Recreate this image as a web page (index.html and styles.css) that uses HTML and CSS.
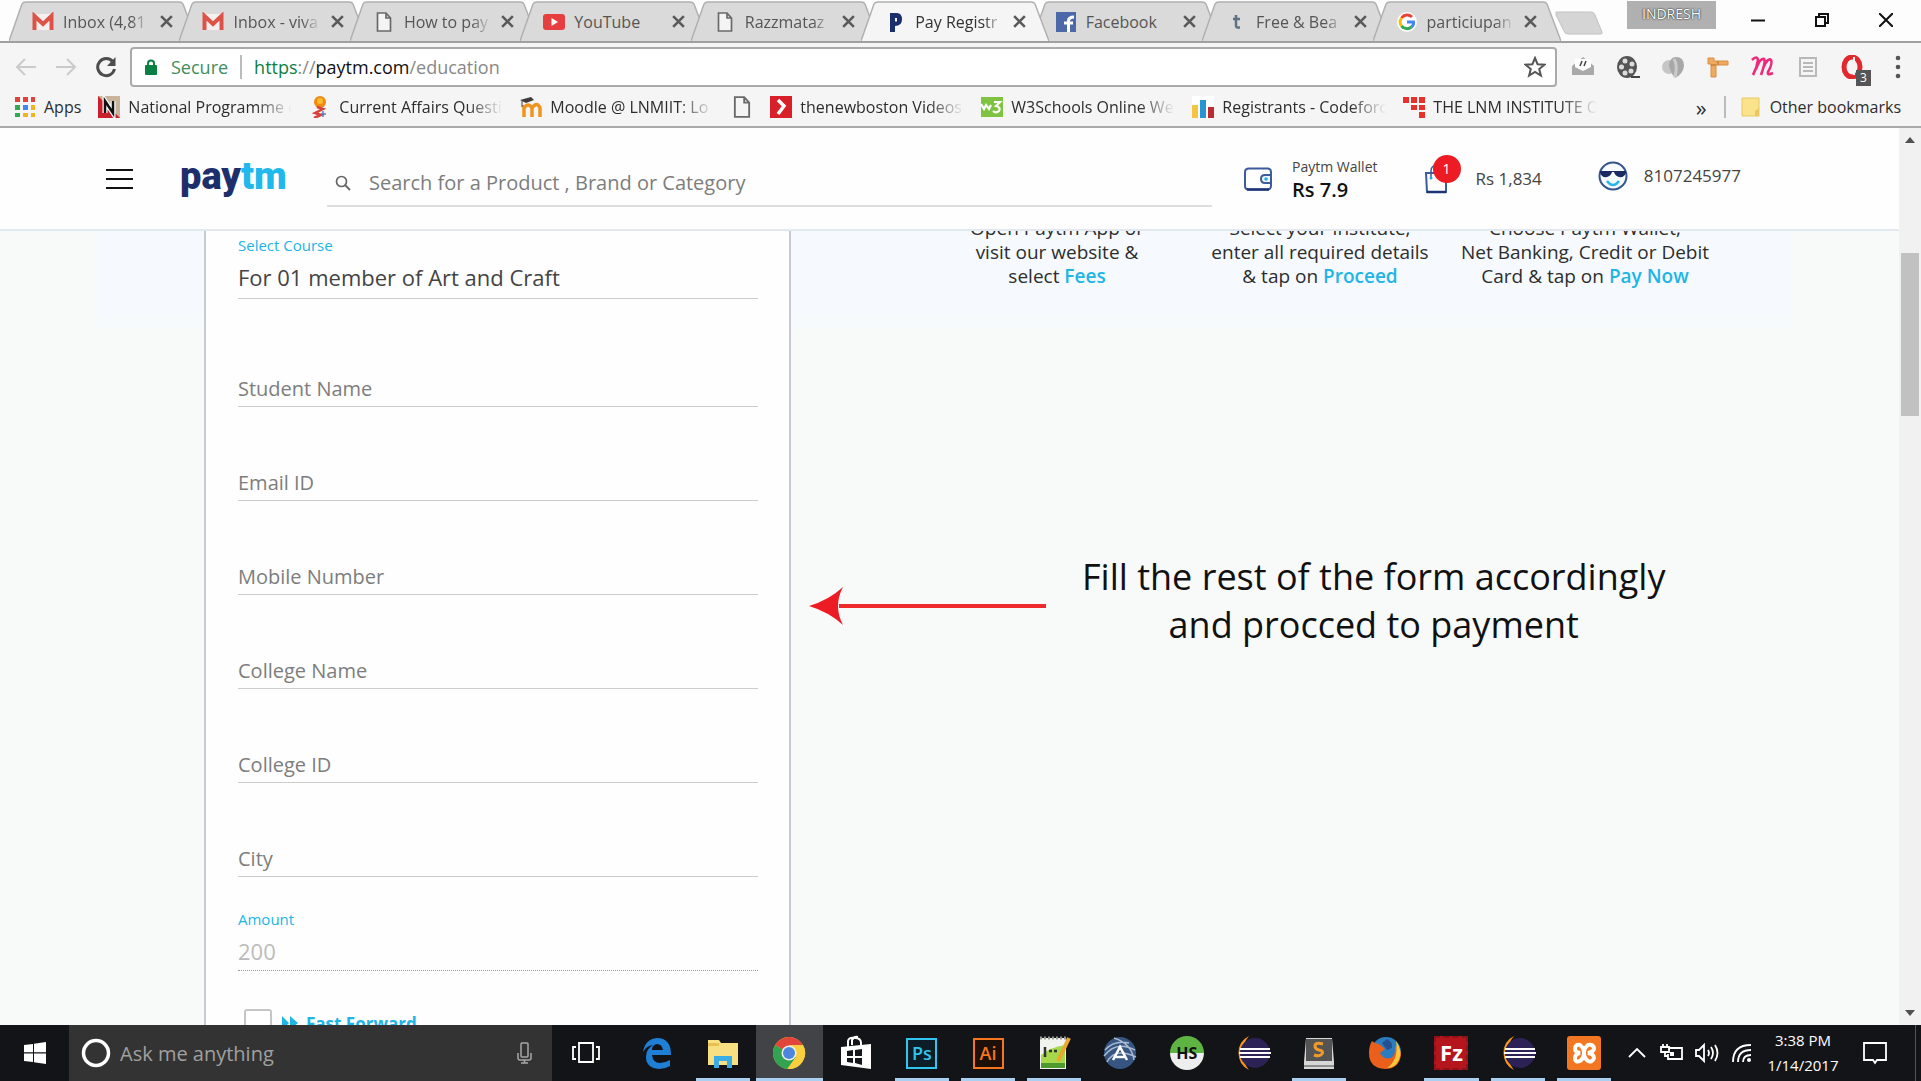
FILE: index.html
```html
<!DOCTYPE html>
<html lang="en">
<head>
<meta charset="utf-8">
<title>Pay Registration Fees</title>
<link rel="stylesheet" href="styles.css">
</head>
<body>
<svg class="defs" aria-hidden="true">
  <symbol id="tab-shape" viewBox="0 0 188 40"><path d="M0 40 L13 3 Q14 1 17 1 H170 Q173 1 174 3 L188 40" stroke="#b0b0b0" stroke-width="1.5"/></symbol>
  <symbol id="x" viewBox="0 0 14 14"><path d="M2 2 L12 12 M12 2 L2 12" stroke="#5a5a5a" stroke-width="2.4"/></symbol>
  <symbol id="gmail" viewBox="0 0 22 18"><rect x="1" y="1" width="20" height="16" fill="#f3f0ef"/><path d="M2.5 17 V3 L11 11 L19.500 3 V17" fill="none" stroke="#dd5347" stroke-width="4"/></symbol>
  <symbol id="file" viewBox="0 0 16 20"><path d="M1.500 1 H10 L14.500 6 V19 H1.500 Z M10 1 V6 H14.500" fill="#f4f4f4" stroke="#6a6a6a" stroke-width="1.700"/></symbol>
  <symbol id="eclipse" viewBox="0 0 36 36"><path d="M14 1 A19 19 0 0 0 14 35 A26 26 0 0 1 14 1" fill="#f7941e"/><circle cx="20" cy="18" r="15" fill="#2c2255"/><path d="M5 14 H35 M4 18 H36 M5 22 H35" stroke="#fff" stroke-width="2.200"/></symbol>
</svg>

<nav class="tabs" aria-label="Tabs">
  <div class="tab-list">
    <div class="tab"><svg class="shape"><use href="#tab-shape"/></svg><svg class="fav"><use href="#gmail"/></svg><span class="title fade">Inbox (4,81</span><button aria-label="Close tab"><svg><use href="#x"/></svg></button></div>
    <div class="tab"><svg class="shape"><use href="#tab-shape"/></svg><svg class="fav"><use href="#gmail"/></svg><span class="title fade">Inbox - viva</span><button aria-label="Close tab"><svg><use href="#x"/></svg></button></div>
    <div class="tab"><svg class="shape"><use href="#tab-shape"/></svg><svg class="fav"><use href="#file"/></svg><span class="title fade">How to pay</span><button aria-label="Close tab"><svg><use href="#x"/></svg></button></div>
    <div class="tab"><svg class="shape"><use href="#tab-shape"/></svg><svg class="fav" viewBox="0 0 22 18"><rect y="1" width="22" height="16" rx="3" fill="#e5403f"/><path d="M8.500 5 L15 9 L8.500 13 Z" fill="#fff"/></svg><span class="title">YouTube</span><button aria-label="Close tab"><svg><use href="#x"/></svg></button></div>
    <div class="tab"><svg class="shape"><use href="#tab-shape"/></svg><svg class="fav"><use href="#file"/></svg><span class="title fade">Razzmataz</span><button aria-label="Close tab"><svg><use href="#x"/></svg></button></div>
    <div class="tab active"><svg class="shape"><use href="#tab-shape"/></svg><svg class="fav" viewBox="0 0 22 20"><path d="M6 20 V1 H13 Q18 1 18 7.500 Q18 14 11 14 V20 Z M11 6 V9.500 H13 V6 Z" fill="#1d2f6b" fill-rule="evenodd"/></svg><span class="title fade">Pay Registr</span><button aria-label="Close tab"><svg><use href="#x"/></svg></button></div>
    <div class="tab"><svg class="shape"><use href="#tab-shape"/></svg><svg class="fav" viewBox="0 0 20 20"><rect width="20" height="20" fill="#4d68a8"/><path d="M12.500 20 V9 Q12.500 5 18 5 M8 11 H17" stroke="#fff" stroke-width="3" fill="none"/></svg><span class="title">Facebook</span><button aria-label="Close tab"><svg><use href="#x"/></svg></button></div>
    <div class="tab"><svg class="shape"><use href="#tab-shape"/></svg><svg class="fav" viewBox="0 0 20 20"><path d="M10 3 V14 Q10 16 14 15.500 M7 7 H14" stroke="#5c7286" stroke-width="2.500" fill="none"/></svg><span class="title fade">Free &amp; Bea</span><button aria-label="Close tab"><svg><use href="#x"/></svg></button></div>
    <div class="tab"><svg class="shape"><use href="#tab-shape"/></svg><svg class="fav" viewBox="0 0 20 20"><circle cx="10" cy="10" r="10" fill="#fff"/><g fill="none" stroke-width="3"><path d="M4.500 6 A7 7 0 0 1 15 5" stroke="#ea4335"/><path d="M4.500 6 A7 7 0 0 0 4.500 14" stroke="#fbbc05"/><path d="M4.500 14 A7 7 0 0 0 14.500 15" stroke="#34a853"/><path d="M14.500 15 Q17 13 16.500 10 H10" stroke="#4285f4"/></g></svg><span class="title fade">particiupan</span><button aria-label="Close tab"><svg><use href="#x"/></svg></button></div>
  </div>
  <button class="new-tab" aria-label="New tab"><svg viewBox="0 0 48 24"><path d="M1 1 H36 Q39 1 40 4 L47 21 Q48 23 45 23 H13 Q10 23 9 20 L1 4 Z" fill="#d5d5d5" stroke="#c2c2c2"/></svg></button>
  <div class="window">
    <span class="user">INDRESH</span>
    <button aria-label="Minimize"><svg viewBox="0 0 14 14"><path d="M0 7.500 H14" /></svg></button>
    <button aria-label="Restore"><svg viewBox="0 0 14 14"><path d="M1 4 H10 V13 H1 Z M4 4 V1 H13 V10 H10"/></svg></button>
    <button aria-label="Close"><svg viewBox="0 0 14 14"><path d="M0 0 L14 14 M14 0 L0 14"/></svg></button>
  </div>
</nav>

<div class="toolbar">
  <div class="nav-buttons">
    <button aria-label="Back"><svg viewBox="0 0 22 22" stroke="#cbcbcb"><path d="M21 11 H2 M10 3 L2 11 L10 19"/></svg></button>
    <button aria-label="Forward"><svg viewBox="0 0 22 22" stroke="#cbcbcb"><path d="M1 11 H20 M12 3 L20 11 L12 19"/></svg></button>
    <button aria-label="Reload"><svg viewBox="0 0 22 22" stroke="#4d4d4d"><path d="M18 6 A8.500 8.500 0 1 0 19.500 13" stroke-width="3"/><path d="M20.500 1 V10 H12 Z" fill="#4d4d4d" stroke="none"/></svg></button>
  </div>
  <div class="address">
    <svg class="lock" viewBox="0 0 12 16"><path d="M3 7 V4.500 Q3 1.500 6 1.500 Q9 1.500 9 4.500 V7" fill="none" stroke="#0b8043" stroke-width="2"/><rect y="6" width="12" height="10" rx="1" fill="#0b8043"/></svg>
    <span class="secure">Secure</span>
    <span class="url"><span class="scheme">https</span>://<b>paytm.com</b>/education</span>
    <button aria-label="Bookmark"><svg viewBox="0 0 22 22"><path d="M11 2 L13.600 8.200 L20.400 8.700 L15.200 13 L16.900 19.600 L11 16 L5.100 19.600 L6.800 13 L1.600 8.700 L8.400 8.200 Z" fill="none" stroke="#555" stroke-width="2"/></svg></button>
  </div>
  <div class="extensions">
    <svg viewBox="0 0 24 24"><path d="M1 11 L12 2 L23 11 V20 H1 Z" fill="#a9a9a9"/><path d="M4 4 H20 V12 L12 16 L4 12 Z" fill="#fff"/><path d="M9 11 L11 6 M13 11 L15 6" stroke="#444" stroke-width="1.500"/></svg>
    <svg viewBox="0 0 24 24"><ellipse cx="11" cy="12" rx="10" ry="11" fill="#555"/><g fill="#ddd"><circle cx="9" cy="6" r="2.500"/><circle cx="16" cy="9" r="2.500"/><circle cx="5.500" cy="12" r="2.500"/><circle cx="9" cy="18" r="2.500"/><circle cx="15" cy="16" r="2.500"/></g><path d="M15 22 H24" stroke="#444" stroke-width="2"/></svg>
    <svg viewBox="0 0 24 24"><ellipse cx="8" cy="12" rx="7" ry="7" fill="#c6c6c6"/><path d="M15 2 Q23 2 23 11 Q22 19 14 23 Q9 17 8 10 Q9 2 15 2" fill="#a8a8a8"/><path d="M13 4 Q17 10 14 22" stroke="#ccc" stroke-width="3" fill="none"/></svg>
    <svg viewBox="0 0 24 24"><path d="M2 3 H8 V6 H22 V10 H10 V22 H5 V9 H2 Z" fill="#efaa62" stroke="#d88e42"/><path d="M5 10 H10 M12 6 V10" stroke="#b36b28"/></svg>
    <svg viewBox="0 0 24 24"><path d="M1 5 Q6 0 7 5 Q6 13 2 20 M5 14 Q9 3 13 4 Q15 6 10 20 M12 13 Q17 2 20 5 Q22 8 17 17 Q16 21 22 18" fill="none" stroke="#ee2a7b" stroke-width="2.600"/></svg>
    <svg viewBox="0 0 24 24"><path d="M4 3 H20 V21 H4 Z M7 8 H17 M7 12 H17 M7 16 H17" fill="none" stroke="#b9b9b9" stroke-width="2"/></svg>
    <span class="badged"><svg viewBox="0 0 24 24"><ellipse cx="11" cy="12" rx="8" ry="10" fill="none" stroke="#e3282d" stroke-width="5"/><path d="M13 2 V20" stroke="#f5f5f5" stroke-width="2"/></svg><small>3</small></span>
    <svg viewBox="0 0 24 24" fill="#555"><circle cx="12" cy="3" r="2.300"/><circle cx="12" cy="12" r="2.300"/><circle cx="12" cy="21" r="2.300"/></svg>
  </div>
</div>

<nav class="bookmarks" aria-label="Bookmarks">
  <a class="apps" href="#"><svg viewBox="0 0 22 22"><path d="M1 1h5v5H1zM9 1h5v5H9zM17 1h4v5h-4z" fill="#e04438"/><path d="M1 9h5v5H1z" fill="#34a853"/><path d="M9 9h5v5H9z" fill="#4285f4"/><path d="M17 9h4v5h-4zM9 17h5v4H9zM17 17h4v4h-4z" fill="#f2b41d"/><path d="M1 17h5v4H1z" fill="#34a853"/></svg><span>Apps</span></a>
  <a href="#"><svg viewBox="0 0 22 22"><rect width="22" height="22" fill="#c8b49b"/><path d="M0 0 V22 H22 Z" fill="#c9202c"/><path d="M7 17 V5 L15 17 V5" stroke="#fff" stroke-width="5" fill="none"/><path d="M7 17 V5 L15 17 V5" stroke="#111" stroke-width="2.500" fill="none"/></svg><span class="fade">National Programme o</span></a>
  <a href="#"><svg viewBox="0 0 22 22"><circle cx="11" cy="6" r="6" fill="#f08a12"/><circle cx="11" cy="5" r="3" fill="#fbbd2c"/><path d="M8 11 L14 13 L6 17 L12 19 L5 22" fill="none" stroke="#d8403b" stroke-width="2.500"/><path d="M12 18 H17 M14 15 V21" stroke="#5c7cc0" stroke-width="1.500"/></svg><span class="fade">Current Affairs Questi</span></a>
  <a href="#"><svg viewBox="0 0 22 22"><path d="M4 21 V9 M4 12 Q8 6 12 12 V21 M12 12 Q17 5 20 12 V21" fill="none" stroke="#f0941f" stroke-width="3.500"/><path d="M0 4 L11 1 L14 4 L6 7 Z" fill="#403b3b"/><path d="M2 5 V11" stroke="#403b3b"/></svg><span class="fade">Moodle @ LNMIIT: Lo</span></a>
  <a class="icon-only" href="#" aria-label="Untitled page"><svg><use href="#file"/></svg></a>
  <a href="#"><svg viewBox="0 0 22 22"><rect width="22" height="22" fill="#d81f2a"/><path d="M8 4 L14 10 L8 18" stroke="#fff" stroke-width="3.500" fill="none"/></svg><span class="fade">thenewboston Videos</span></a>
  <a href="#"><svg viewBox="0 0 22 22"><rect y="1" width="22" height="20" fill="#80c342"/><path d="M0 8 L3 13 L5 9 L8 13 L10 9 M13 6 H19 L15 10 Q20 11 18 15 Q15 18 12 15" fill="none" stroke="#fff" stroke-width="2.200"/></svg><span class="fade">W3Schools Online We</span></a>
  <a href="#"><svg viewBox="0 0 22 22"><rect width="22" height="22" fill="#fff"/><path d="M0 9h6v13H0z" fill="#f5c443"/><path d="M8 4h6v18H8z" fill="#2795d4"/><path d="M16 11h6v11h-6z" fill="#b92d32"/></svg><span class="fade">Registrants - Codeforc</span></a>
  <a href="#"><svg viewBox="0 0 22 22"><path d="M0 1h6v6H0zM8 1h6v6H8zM16 1h6v6h-6zM8 9h6v5H8zM16 9h6v5h-6zM16 16h6v6h-6z" fill="#e5322d"/></svg><span class="fade">THE LNM INSTITUTE O</span></a>
  <span class="more">»</span>
  <a class="other" href="#"><svg viewBox="0 0 22 22"><path d="M2 2 H19 V20 H2 Z" fill="#fbe28c" stroke="#e9c95e"/><path d="M15 20 V15 L19 12 V20 Z" fill="#e9c95e"/></svg><span>Other bookmarks</span></a>
</nav>

<div class="viewport">
  <div class="page">
    <header class="site-header">
      <button class="menu" aria-label="Menu"><svg viewBox="0 0 27 22"><path d="M0 2 H27 M0 11 H27 M0 20 H27" stroke="#111" stroke-width="2"/></svg></button>
      <a class="logo" href="#">pay<span>tm</span></a>
      <form class="search"><svg viewBox="0 0 16 16"><circle cx="6.500" cy="6.500" r="5" fill="none" stroke="#666" stroke-width="1.700"/><path d="M10 10 L15 15" stroke="#666" stroke-width="1.800"/></svg><input type="search" aria-label="Search" placeholder="Search for a Product , Brand or Category"></form>
      <div class="account">
        <a class="wallet" href="#"><svg viewBox="0 0 28 24"><path d="M27 8 V5 Q27 2 24 1.500 H5 Q1 1.500 1 5 V19 Q1 22.500 5 22.500 H24 Q27 22 27 19 V16" fill="none" stroke="#3c5b9c" stroke-width="2"/><path d="M3 22.500 H25" stroke="#1c3475" stroke-width="2.500"/><path d="M27 8 H21 Q17 8 17 12 Q17 16 21 16 H27 Z" fill="#eef7fd" stroke="#3c5b9c" stroke-width="2"/><circle cx="22" cy="12" r="1.800" fill="#29a9e0"/></svg><span class="stack"><small>Paytm Wallet</small><b>Rs 7.9</b></span></a>
        <a class="cart" href="#"><span class="bag"><svg viewBox="0 0 24 30"><path d="M2 9 H22 V28 H3 Z" fill="#fff" stroke="#3c5b9c" stroke-width="2"/><path d="M3 28 H22" stroke="#1c3475" stroke-width="2.500"/><path d="M7 13 V7 Q7 1 13 2" fill="none" stroke="#3c5b9c" stroke-width="1.500"/><circle cx="7" cy="14" r="1.500" fill="#29a9e0"/></svg><i>1</i></span><span>Rs 1,834</span></a>
        <a class="user-link" href="#"><svg viewBox="0 0 30 30"><circle cx="15" cy="15" r="13.500" fill="#f7fbff" stroke="#34548c" stroke-width="2"/><path d="M2 10 H28 V12 Q26 17 21 16 Q17 15 16 11 H14 Q13 15 9 16 Q4 17 2 12 Z" fill="#1c2a63"/><path d="M9 20 Q15 28 21 20" fill="none" stroke="#29b6ea" stroke-width="2.500"/></svg><span>8107245977</span></a>
      </div>
    </header>
    <main class="content">
      <form class="pay-form">
        <div class="filled"><label for="course">Select Course</label><input id="course" value="For 01 member of Art and Craft"></div>
        <input class="blank" aria-label="Student Name" placeholder="Student Name">
        <input class="blank" aria-label="Email ID" placeholder="Email ID">
        <input class="blank" aria-label="Mobile Number" placeholder="Mobile Number">
        <input class="blank" aria-label="College Name" placeholder="College Name">
        <input class="blank" aria-label="College ID" placeholder="College ID">
        <input class="blank" aria-label="City" placeholder="City">
        <div class="filled amount"><label for="amount">Amount</label><input id="amount" value="200" disabled></div>
        <label class="fast"><input type="checkbox"><svg viewBox="0 0 16 16"><path d="M0 1 L7 8 L0 15 Z M8 1 L16 8 L8 15 Z" fill="#21b5e6"/></svg>Fast Forward</label>
      </form>
      <section class="side">
        <div class="steps">
          <p>Open Paytm App or<br>visit our website &amp;<br>select <b>Fees</b></p>
          <p>Select your Institute,<br>enter all required details<br>&amp; tap on <b>Proceed</b></p>
          <p>Choose Paytm Wallet,<br>Net Banking, Credit or Debit<br>Card &amp; tap on <b>Pay Now</b></p>
        </div>
        <div class="note">
          <svg viewBox="0 0 237 38"><path d="M30 19 H237" stroke="#ee2a2c" stroke-width="4"/><path d="M0 19 Q20 13 34 0 Q24 19 34 38 Q20 25 0 19" fill="#ed1c24"/></svg>
          <p>Fill the rest of the form accordingly<br>and procced to payment</p>
        </div>
      </section>
    </main>
  </div>
  <div class="scrollbar" aria-hidden="true"><svg viewBox="0 0 10 8"><path d="M5 1 L10 7 H0 Z" fill="#505050"/></svg><div class="thumb"></div><svg viewBox="0 0 10 8"><path d="M5 7 L10 1 H0 Z" fill="#505050"/></svg></div>
</div>

<footer class="taskbar">
  <button class="start" aria-label="Start"><svg viewBox="0 0 22 22" fill="#fff"><path d="M0 3 L9 2 V10.300 H0 Z M10 1.800 L22 0 V10.300 H10 Z M0 11.500 H9 V20 L0 19 Z M10 11.500 H22 V22 L10 20.200 Z"/></svg></button>
  <div class="cortana"><svg class="ring" viewBox="0 0 30 30"><circle cx="15" cy="15" r="12.500" fill="none" stroke="#fff" stroke-width="3.500"/></svg><input aria-label="Ask me anything" placeholder="Ask me anything"><svg class="mic" viewBox="0 0 15 22" fill="none" stroke="#a8a8a8" stroke-width="1.500"><rect x="4" y="1" width="7" height="14" rx="1"/><path d="M1 11 V16 Q1 18 3 18 H12 Q14 18 14 16 V11 M7.500 18 V21 M4 21 H11"/></svg></div>
  <button class="task-view" aria-label="Task view"><svg viewBox="0 0 28 22" fill="none" stroke="#fff" stroke-width="1.800"><path d="M7 1 H21 V20 H7 Z M4 5 H1 V17 H4 M24 5 H27 V17 H24"/></svg></button>
  <div class="programs">
    <button aria-label="Edge"><svg viewBox="0 0 36 36"><path d="M4 17 Q6 4 18 3 Q32 3 32 20 H13 Q14 28 21 28 Q26 28 31 25 V31 Q26 34 20 34 Q7 33 7 22 Q7 14 14 10 Q7 11 4 17 M13 15 H24 Q23 9 18 9 Q13 10 13 15" fill="#1f7fd4" fill-rule="evenodd"/></svg></button>
    <button class="open" aria-label="File Explorer"><svg viewBox="0 0 36 36"><path d="M3 5 H14 L16 8 H33 V30 H3 Z" fill="#f8df81"/><path d="M3 8 H14 V11 H3 Z" fill="#e9c04d"/><path d="M9 21 H27 V33 H22 V26 H14 V33 H9 Z" fill="#3aade4"/></svg></button>
    <button class="open current" aria-label="Chrome"><svg viewBox="0 0 36 36"><circle cx="18" cy="18" r="16" fill="#f9cf3f"/><path d="M18 18 L4.200 10 A16 16 0 0 1 31.800 10 Z" fill="#e0443a"/><path d="M18 18 L4.200 10 A16 16 0 0 0 16 34 L25 22 Z" fill="#32a350"/><path d="M18 10 H32 A16 16 0 0 1 17 34 L25 22 Z" fill="#f9cf3f"/><circle cx="18" cy="18" r="7.500" fill="#eee"/><circle cx="18" cy="18" r="6" fill="#4b87dc"/></svg></button>
    <button aria-label="Store"><svg viewBox="0 0 36 36"><path d="M3 12 L33 9 V34 L3 30 Z" fill="#fff"/><path d="M10 12 V6 Q11 2 17 3 Q23 3 23 8 V11 M14 10 V5 Q16 1 20 2" fill="none" stroke="#fff" stroke-width="2"/><path d="M9 16 L15 15 V21 H9 Z M17 15 L24 14 V21 H17 Z M9 23 H15 V28 L9 27 Z M17 23 H24 V30 L17 28 Z" fill="#15171c"/></svg></button>
    <button class="open" aria-label="Photoshop"><span class="adobe ps">Ps</span></button>
    <button class="open" aria-label="Illustrator"><span class="adobe ai">Ai</span></button>
    <button class="open" aria-label="Notepad++"><svg viewBox="0 0 36 36"><path d="M4 3 H30 V34 H4 Z" fill="#f1f4ee"/><path d="M5 20 Q15 12 29 10 V33 H5 Z" fill="#a5d84a"/><path d="M5 28 H29 V33 H5 Z" fill="#4d9a2f"/><path d="M4 3 H30" stroke="#999" stroke-width="3" stroke-dasharray="2"/><path d="M9 12 V22 M13 16 H16 M18 16 H21" stroke="#333" stroke-width="2.500"/><path d="M33 3 L22 26" stroke="#eaa92e" stroke-width="4"/></svg></button>
    <button aria-label="Atom"><svg viewBox="0 0 36 36"><circle cx="18" cy="18" r="16" fill="#375581"/><path d="M3 15 Q12 5 27 8 M2 21 Q14 5 33 15 M5 27 Q13 12 34 22 M12 3 Q30 9 32 25" fill="none" stroke="#a9bad3" stroke-width="1.500"/><path d="M11 25 L18 12 L25 25 M13 22 H24" fill="none" stroke="#fff" stroke-width="2.500"/></svg></button>
    <button aria-label="HeidiSQL"><span class="hs">HS</span></button>
    <button aria-label="Eclipse"><svg><use href="#eclipse"/></svg></button>
    <button class="open" aria-label="Sublime Text"><svg viewBox="0 0 36 36"><path d="M5 3 H31 L33 27 V34 H3 V27 Z" fill="#d7d7d7"/><path d="M5 4 H31 V26 H5 Z" fill="#545454"/><path d="M3 31 H33" stroke="#777" stroke-width="1.500"/><path d="M22 9 Q14 7 14 11 Q14 14 18 15 Q23 16 21 19 Q19 22 13 20" fill="none" stroke="#f19a2c" stroke-width="3"/></svg></button>
    <button aria-label="Firefox"><svg viewBox="0 0 36 36"><circle cx="19" cy="17" r="15" fill="#2c7cc0"/><path d="M5 6 Q8 9 12 9 L18 14 L13 18 Q16 25 24 23 Q29 20 28 11 Q34 13 34 20 Q32 34 18 34 Q2 33 2 18 Q2 11 5 6" fill="#ea5f1c"/><path d="M29 6 Q36 16 32 25 Q28 33 20 33 Q32 25 29 6" fill="#fac83a"/><path d="M20 4 Q26 7 25 13 L20 15 L15 8 Z" fill="#255191"/></svg></button>
    <button class="open" aria-label="FileZilla"><span class="fz">Fz</span></button>
    <button class="open" aria-label="Eclipse workspace"><svg><use href="#eclipse"/></svg></button>
    <button class="open" aria-label="XAMPP"><svg viewBox="0 0 36 36"><rect x="1" y="1" width="34" height="34" rx="3" fill="#f37623"/><path d="M9 14 Q9 9 14 10 Q18 13 18 18 Q18 13 22 10 Q28 9 28 14 Q27 17 22 18 Q28 19 28 23 Q26 28 22 26 Q18 23 18 18 Q18 23 14 26 Q9 28 9 23 Q9 19 14 18 Q9 17 9 14" fill="none" stroke="#fff" stroke-width="4"/></svg></button>
  </div>
  <div class="tray">
    <svg viewBox="0 0 24 24"><path d="M4 16 L12 8 L20 16"/></svg>
    <svg viewBox="0 0 24 24"><path d="M9 7 H22 V18 H8 V13 M3 3 V6 M7 3 V6 M1 6 H9 V11 H5 H1 Z M5 11 V15 H8"/><path d="M12 11 V15" stroke-width="4"/></svg>
    <svg viewBox="0 0 24 24"><path d="M1 9 H4 L9 4 V20 L4 15 H1 Z M13 9 Q15 12 13 15 M16 6 Q20 12 16 18 M20 4 Q25 12 20 20"/></svg>
    <svg viewBox="0 0 24 24"><path d="M3 21 Q3 4 21 4 M8 21 Q8 9 21 9 M13 21 Q13 14 21 14"/><circle cx="19" cy="19" r="2" fill="#fff" stroke="none"/></svg>
    <time datetime="2017-01-14T15:38">3:38 PM<br>1/14/2017</time>
    <button aria-label="Notifications"><svg viewBox="0 0 24 24"><path d="M1 2 H23 V19 H14 L12 22 L10 19 H1 Z"/></svg></button>
  </div>
</footer>
</body>
</html>
```
FILE: styles.css
```css
* { box-sizing: border-box; }
body {
  margin: 0;
  height: 100vh;
  display: flex;
  flex-direction: column;
  overflow: hidden;
  font-family: "Open Sans", "Noto Sans", sans-serif;
  font-size: 16px;
  color: #2d2d2d;
  background: #fdfdfd;
}
.defs { position: absolute; width: 0; height: 0; }
svg { flex: none; display: block; }
button { padding: 0; border: 0; background: none; font: inherit; color: inherit; }
input { font: inherit; min-width: 0; padding: 0; border: 0; outline: 0; background: none; }
a { color: inherit; text-decoration: none; }
p { margin: 0; }
.fade { -webkit-mask-image: linear-gradient(90deg, #000 78%, transparent); mask-image: linear-gradient(90deg, #000 78%, transparent); }

/* Tab strip */
.tabs { display: flex; align-items: flex-start; height: 41px; flex: none; padding-left: 9px; }
.tab-list { flex: 1; display: grid; grid-template-columns: repeat(9, minmax(0, 1fr)); height: 41px; }
.tab { position: relative; display: flex; align-items: center; padding: 2px 5px 0 23px; gap: 9px; color: #555; }
.shape { position: absolute; left: 0; top: 1px; width: 188px; height: 40px; fill: #dadada; z-index: -1; }
.tab.active { color: #333; }
.active .shape { fill: #f5f5f5; z-index: 1; }
.active > :not(.shape) { position: relative; z-index: 2; }
.fav { width: 22px; height: 20px; }
.title { flex: 1; min-width: 0; overflow: hidden; white-space: nowrap; }
.tab button svg { width: 15px; height: 15px; }
.new-tab { flex: none; margin: 11px 0 0 12px; }
.new-tab svg { width: 48px; height: 24px; }
.window { flex: none; display: flex; gap: 50px; padding: 0 28px 0 24px; height: 40px; align-items: center; }
.window svg { width: 14px; height: 14px; fill: none; stroke: #111; stroke-width: 2; }
.user { align-self: flex-start; width: 89px; height: 28px; margin: 1px -15px 0 0; background: #b0b0b0; color: #fff; text-align: center; font-size: 14px; line-height: 26px; text-shadow: 0 0 2px #222, 0 0 1px #222; }

/* Address row */
.toolbar { display: flex; align-items: center; flex: none; height: 50px; border-top: 2px solid #a0a0a0; background: #f5f5f5; padding: 0 11px 0 15px; }
.nav-buttons { display: flex; gap: 18px; width: 115px; }
.nav-buttons svg { width: 22px; height: 22px; fill: none; stroke-width: 2; }
.address { flex: 1; display: flex; align-items: center; height: 40px; border: 2px solid #aaa; border-radius: 4px; background: #fff; padding: 0 9px 0 13px; font-size: 18px; color: #888; }
.lock { width: 12px; height: 16px; margin-right: 14px; }
.secure { color: #3e8d5b; padding-right: 12px; border-right: 2px solid #bbb; margin-right: 12px; }
.scheme { color: #0b8043; }
.url { flex: 1; }
.url b { font-weight: 400; color: #111; }
.address button svg { width: 22px; height: 22px; }
.extensions { display: flex; gap: 21px; padding-left: 14px; }
.extensions svg { width: 24px; height: 24px; }
.badged { position: relative; }
.badged small { position: absolute; right: -6px; bottom: -7px; width: 15px; height: 16px; background: #555; color: #fff; font-size: 12px; line-height: 16px; text-align: center; }

/* Bookmark bar */
.bookmarks { display: flex; align-items: center; flex: none; height: 37px; padding: 0 20px 4px 14px; gap: 17px; background: #f5f5f5; border-bottom: 2px solid #aaa; white-space: nowrap; }
.bookmarks a { display: flex; align-items: center; gap: 8px; }
.bookmarks svg { width: 22px; height: 22px; }
.bookmarks .fade { width: 164px; overflow: hidden; }
.more { margin-left: auto; font-size: 22px; line-height: 24px; }
.other { border-left: 2px solid #bbb; padding-left: 14px; }

/* Page area */
.viewport { flex: 1; min-height: 0; display: flex; }
.page { flex: 1; min-width: 0; display: flex; flex-direction: column; background: #f7fafa; }
.site-header { display: flex; flex: none; height: 103px; align-items: center; background: #fefefe; border-bottom: 2px solid #e2e8ef; padding: 0 158px 0 106px; }
.menu { width: 74px; }
.menu svg { width: 27px; height: 22px; }
.logo { width: 147px; padding-bottom: 6px; font: 900 38px/40px Roboto, sans-serif; color: #1d2f6b; }
.logo span { color: #21b8ec; }
.search { flex: 1; display: flex; align-items: center; gap: 18px; height: 50px; margin-top: 6px; padding: 4px 0 0 8px; border-bottom: 2px solid #dedede; }
.search svg { width: 16px; height: 16px; }
.search input { flex: 1; font-size: 20px; }
::placeholder { color: #7d7d7d; opacity: 1; }
.account { display: flex; align-items: center; padding-left: 32px; gap: 46px; color: #444; font-size: 17px; }
.account a { display: flex; align-items: center; gap: 16px; }
.account .wallet { gap: 20px; }
.wallet svg { width: 28px; height: 24px; }
.stack { display: flex; flex-direction: column; line-height: 23px; padding-bottom: 2px; }
.stack small { font-size: 14px; }
.stack b { font-size: 20px; font-weight: 600; color: #111; }
.bag { position: relative; width: 36px; }
.bag svg { width: 24px; height: 30px; }
.bag i { position: absolute; left: 9px; top: -9px; width: 28px; height: 28px; border-radius: 50%; background: #ed1c24; color: #fff; font-style: normal; font-size: 14px; line-height: 28px; text-align: center; }
.user-link { margin-left: 10px; padding-bottom: 6px; }
.user-link svg { width: 30px; height: 30px; }
.content { flex: 1; min-height: 0; display: flex; overflow: hidden; padding-left: 204px; background: linear-gradient(#f6fafe, #f6fafe 84px, #f7faf9) 98px 0 / calc(100% - 206px) 100px no-repeat #f7faf9; }

/* Payment form */
.pay-form { flex: none; width: 587px; height: 900px; padding: 4px 31px 0 32px; background: #fefefe; border: solid #c5cbd0; border-width: 0 2px; }
.filled { display: flex; flex-direction: column; height: 64px; border-bottom: 1px solid #ccc; }
.filled label { font-size: 15px; line-height: 20px; color: #21b5e6; }
.filled input { flex: 1; font-size: 22px; color: #444; }
.blank { display: block; width: 100%; height: 38px; margin-top: 56px; padding-top: 2px; border-bottom: 1px solid #ccc; font-size: 20px; }
.filled + .blank { margin-top: 70px; }
.amount { height: 62px; margin-top: 32px; border-bottom: 1px dotted #999; }
.amount input { color: #bbb; padding-top: 2px; }
.fast { display: flex; align-items: center; margin-top: 38px; padding-left: 6px; gap: 8px; font-size: 17px; font-weight: 700; color: #21b5e6; }
.fast input { appearance: none; margin: 0 2px 0 0; width: 28px; height: 28px; border: 2px solid #c5c5c5; border-radius: 3px; background: #fff; }
.fast svg { width: 16px; height: 16px; }

/* Instructions */
.side { flex: 1; padding-left: 18px; }
.steps { display: grid; grid-template-columns: 248px 278px 252px; justify-content: start; margin: -15px 0 0 124px; text-align: center; font-size: 19px; line-height: 24px; white-space: nowrap; }
.steps p { justify-self: center; }
.steps b { font-weight: 600; color: #21b5e6; }
.note { display: flex; align-items: center; gap: 36px; margin-top: 265px; color: #111; font-size: 36px; line-height: 48px; text-align: center; white-space: nowrap; }
.note svg { width: 237px; height: 38px; margin-top: 10px; }

.scrollbar { width: 22px; flex: none; display: flex; flex-direction: column; align-items: center; justify-content: space-between; padding: 8px 0; background: #f1f1f1; }
.scrollbar svg { width: 10px; height: 8px; }
.thumb { width: 18px; height: 163px; margin: 109px 0 auto; background: #c1c1c1; }

/* Taskbar */
.taskbar { display: flex; flex: none; height: 56px; background: #131418; color: #fff; }
.start { width: 69px; padding-left: 24px; }
.start svg { width: 22px; height: 22px; }
.cortana { width: 483px; display: flex; align-items: center; padding: 0 20px 0 12px; gap: 9px; background: #333; font-size: 20px; }
.ring { width: 30px; height: 30px; }
.cortana input { flex: 1; }
.cortana ::placeholder { color: #a0a0a0; }
.mic { width: 15px; height: 22px; }
.task-view { width: 72px; padding-left: 20px; }
.task-view svg { width: 28px; height: 22px; }
.programs { flex: 1; display: grid; grid-template-columns: repeat(15, 1fr); }
.programs button { position: relative; display: flex; align-items: center; justify-content: center; }
.programs svg { width: 36px; height: 36px; }
.open::after { content: ""; position: absolute; left: 6px; right: 6px; bottom: 0; height: 3px; background: #a9d0f0; }
.current { background: #424347; }
.current::after { left: 0; right: 0; }
.adobe { width: 31px; height: 31px; border: 2px solid; font-size: 18px; line-height: 26px; font-weight: 600; color: #31c5f0; background: #0c1d28; }
.ai { color: #f7751e; background: #1d1009; }
.hs { width: 34px; height: 34px; border-radius: 50%; background: linear-gradient(#5eb443 50%, #eee 50%); color: #111; font-size: 16px; line-height: 34px; font-weight: 700; }
.fz { width: 34px; height: 34px; border: 2px dashed #8e1319; background: #b5151c; font-size: 22px; line-height: 29px; font-weight: 700; }
.tray { display: flex; align-items: center; gap: 11px; padding: 0 28px 0 8px; margin-right: 5px; border-right: 1px solid #555; }
.tray svg { width: 24px; height: 24px; fill: none; stroke: #fff; stroke-width: 1.8; }
.tray time { width: 76px; margin-right: 11px; font-size: 15px; line-height: 25px; text-align: center; }
```
